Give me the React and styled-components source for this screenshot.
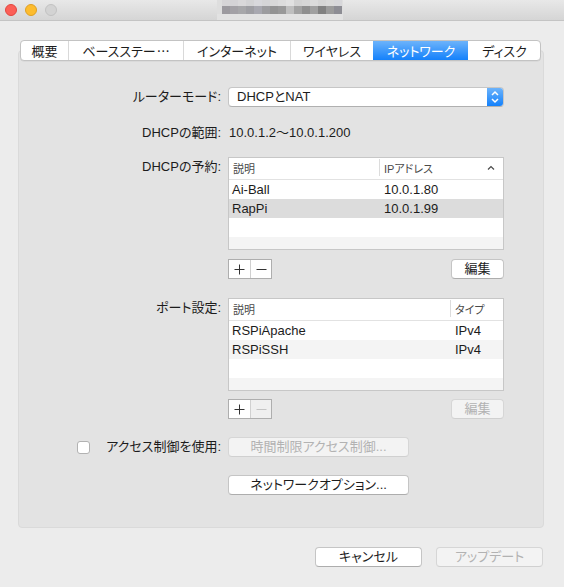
import React from 'react';
import styled, { createGlobalStyle } from 'styled-components';

const Global = createGlobalStyle`
  html, body { margin: 0; padding: 0; background: #ececec; }
  body {
    font-family: "Liberation Sans", "Noto Sans CJK JP", sans-serif;
    font-size: 13px;
    color: #1c1c1c;
    font-feature-settings: "palt";
  }
  * { box-sizing: border-box; }
`;

const Window = styled.div`
  width: 564px;
  height: 587px;
  background: #ececec;
  display: flex;
  flex-direction: column;
  overflow: hidden;
`;

const TitleBar = styled.div`
  height: 21px;
  flex: none;
  display: flex;
  align-items: flex-start;
  padding-left: 5px;
  background: linear-gradient(#e8e8e8, #d5d5d5);
  border-bottom: 1px solid #c4c4c4;
`;

const Lights = styled.div`
  display: flex;
  gap: 8px;
  margin-top: 4px;
`;

const Light = styled.span`
  width: 12px;
  height: 12px;
  border-radius: 50%;
  background: ${p => p.$c};
  border: 1px solid ${p => p.$b};
`;

const TitleMosaic = styled.svg`
  margin-left: 160px;
  display: block;
`;

const Body = styled.div`
  flex: 1;
  display: flex;
  flex-direction: column;
  padding: 19px 20px 0 18px;
`;

const TabBar = styled.div`
  position: relative;
  z-index: 1;
  display: flex;
  height: 21px;
  margin: 0 3px -11px 2px;
  background: #fff;
  border: 1px solid #c3c3c3;
  border-radius: 4px;
  overflow: hidden;
  box-shadow: 0 0.5px 0 rgba(0,0,0,0.08);
`;

const Tab = styled.div`
  flex: ${p => (p.$w ? `0 0 ${p.$w}px` : '1')};
  display: flex;
  align-items: center;
  justify-content: center;
  white-space: nowrap;
  color: ${p => (p.$active ? '#fff' : '#1c1c1c')};
  background: ${p => (p.$active ? 'linear-gradient(#6cb3fb, #1481fb)' : 'transparent')};
  border-left: 1px solid ${p => (p.$first ? 'transparent' : p.$active || p.$afterActive ? 'transparent' : '#d9d9d9')};
  ${p => p.$first && 'border-left: none;'}
`;

const Ellipsis = styled.span`
  font-family: "Noto Sans CJK JP", sans-serif;
  margin-left: 1px;
`;

const Panel = styled.div`
  background: #e3e3e3;
  border: 1px solid #dadada;
  border-radius: 4px;
  padding: 36px 0 32px 0;
  display: flex;
  flex-direction: column;
`;

const FormRow = styled.div`
  display: grid;
  grid-template-columns: 202px 276px;
  column-gap: 7px;
  margin-top: ${p => p.$mt || 0}px;
`;

const Label = styled.div`
  display: flex;
  justify-content: flex-end;
  align-items: ${p => (p.$top ? 'flex-start' : 'center')};
  gap: 17px;
  line-height: 20px;
  height: 20px;
  white-space: nowrap;
`;

const Value = styled.div`
  line-height: 20px;
  padding-left: 1px;
`;

const Select = styled.div`
  height: 20px;
  display: flex;
  background: #fff;
  border: 1px solid #c6c6c6;
  border-bottom-color: #b0b0b0;
  border-radius: 4px;
  overflow: hidden;
`;

const SelectText = styled.div`
  flex: 1;
  padding-left: 8px;
  line-height: 18px;
`;

const Stepper = styled.div`
  width: 16px;
  display: flex;
  align-items: center;
  justify-content: center;
  background: linear-gradient(#6cb3fb, #1481fb);
`;

const Table = styled.div`
  height: 93px;
  background: #fff;
  border: 1px solid #c7c7c7;
  display: flex;
  flex-direction: column;
  overflow: hidden;
`;

const HeaderRow = styled.div`
  flex: none;
  display: grid;
  grid-template-columns: ${p => p.$cols};
  height: 22px;
  border-bottom: 1px solid #e2e2e2;
  font-size: 11px;
  color: #4a4a4a;
`;

const HeaderCell = styled.div`
  display: flex;
  align-items: center;
  justify-content: space-between;
  padding: 0 ${p => (p.$sep ? 8 : 3)}px 0 ${p => (p.$sep ? 4 : 3)}px;
  margin: 1px 0 3px;
  border-left: 1px solid ${p => (p.$sep ? '#dcdcdc' : 'transparent')};
`;

const Row = styled.div`
  flex: none;
  display: grid;
  grid-template-columns: ${p => p.$cols};
  height: 19px;
  line-height: 19px;
  background: ${p => (p.$sel ? '#dcdcdc' : p.$odd ? '#f4f4f4' : '#fff')};
`;

const Cell = styled.div`
  padding-left: ${p => (p.$second ? 5 : 3)}px;
  white-space: nowrap;
`;

const ButtonRow = styled.div`
  display: flex;
  justify-content: space-between;
  align-items: center;
`;

const Segmented = styled.div`
  display: flex;
  height: 20px;
  border: 1px solid #aeaeae;
  background: #fff;
`;

const SegButton = styled.div`
  width: 21px;
  display: flex;
  align-items: center;
  justify-content: center;
  background: ${p => (p.$disabled ? '#efefef' : '#fff')};
  & + & { border-left: 1px solid ${p => (p.$disabled ? '#d0d0d0' : '#aeaeae')}; }
`;

const PushButton = styled.button`
  width: ${p => p.$w}px;
  height: 20px;
  padding: 0;
  font: inherit;
  font-size: 13px;
  line-height: 18px;
  border-radius: 4px;
  border: 1px solid ${p => (p.$disabled ? '#d6d6d6' : '#c5c5c5')};
  border-bottom-color: ${p => (p.$disabled ? '#d0d0d0' : '#adadad')};
  background: ${p => (p.$disabled ? '#f3f3f3' : '#fff')};
  color: ${p => (p.$disabled ? '#b2b2b2' : '#1c1c1c')};
  text-align: center;
  white-space: nowrap;
`;

const Checkbox = styled.span`
  width: 13px;
  height: 13px;
  background: #fff;
  border: 1px solid #b2b2b2;
  border-radius: 3px;
`;

const CheckLabel = styled(Label)`
  gap: 16px;
`;

const Footer = styled.div`
  display: flex;
  justify-content: flex-end;
  gap: 14px;
  padding: 19px 1px 0 0;
`;

const mosaicTop = ['#d6d5d7', '#d4d3d6', '#d9d8da', '#d3d3d5', '#d8d8dc', '#d5d5d7', '#d8d8d8', '#dcdcdc', '#e1e1e1', '#d3d3d3', '#d6d6d6', '#dbdbdb', '#d5d5d5', '#d9d9d9', '#d7d7da'];
const mosaicMid = ['#9c9a9f', '#a3a1a6', '#a7a7aa', '#9e9ea3', '#a8a8b0', '#9c9c9f', '#939393', '#999999', '#bfbfbf', '#a2a2a2', '#8f8f8f', '#a0a0a0', '#818181', '#9b9b9b', '#8d8d94'];

const Title = () => (
  <TitleMosaic width="126" height="20" viewBox="0 0 126 20">
    <rect x="0" y="0" width="126" height="20" fill="#dedede" />
    {mosaicTop.map((c, i) => (
      <rect key={'t' + i} x={5 + i * 8} y="0" width="8" height="6" fill={c} />
    ))}
    {mosaicMid.map((c, i) => (
      <rect key={'m' + i} x={5 + i * 8} y="6" width="8" height="8" fill={c} />
    ))}
    <rect x="0" y="14" width="126" height="6" fill="#e2e2e2" />
  </TitleMosaic>
);

const Plus = ({ c }) => (
  <svg width="11" height="11" viewBox="0 0 11 11">
    <path d="M5.5 0.5V10.5M0.5 5.5H10.5" stroke={c} strokeWidth="1" fill="none" />
  </svg>
);
const Minus = ({ c }) => (
  <svg width="11" height="11" viewBox="0 0 11 11">
    <path d="M0.5 5.5H10.5" stroke={c} strokeWidth="1" fill="none" />
  </svg>
);

const tabs = [
  { t: '概要', w: 47 },
  { t: 'ベースステー', w: 115, ellipsis: true },
  { t: 'インターネット', w: 107 },
  { t: 'ワイヤレス', w: 83 },
  { t: 'ネットワーク', w: 95, active: true },
  { t: 'ディスク' },
];

const DataTable = ({ cols, head, rows, sort }) => (
  <Table>
    <HeaderRow $cols={cols}>
      <HeaderCell>{head[0]}</HeaderCell>
      <HeaderCell $sep>
        <span>{head[1]}</span>
        {sort && (
          <svg width="8" height="5" viewBox="0 0 8 5">
            <path d="M1 4.5L4 1.5L7 4.5" stroke="#4a4a4a" strokeWidth="1.2" fill="none" />
          </svg>
        )}
      </HeaderCell>
    </HeaderRow>
    {[0, 1, 2, 3].map(i => {
      const r = rows[i];
      return (
        <Row key={i} $cols={cols} $odd={i % 2 === 1} $sel={r && r.sel}>
          <Cell>{r ? r.a : ''}</Cell>
          <Cell $second>{r ? r.b : ''}</Cell>
        </Row>
      );
    })}
  </Table>
);

export default function App() {
  return (
    <>
      <Global />
      <Window lang="ja">
        <TitleBar>
          <Lights>
            <Light $c="#fc5f57" $b="#e2463f" />
            <Light $c="#fdbc2e" $b="#dfa023" />
            <Light $c="#d3d3d3" $b="#c2c2c2" />
          </Lights>
          <Title />
        </TitleBar>
        <Body>
          <TabBar>
            {tabs.map((tb, i) => (
              <Tab
                key={tb.t}
                $w={tb.w}
                $first={i === 0}
                $active={tb.active}
                $afterActive={i > 0 && tabs[i - 1].active}
              >
                {tb.t}
                {tb.ellipsis && <Ellipsis>⋯</Ellipsis>}
              </Tab>
            ))}
          </TabBar>
          <Panel>
            <FormRow>
              <Label>ルーターモード:</Label>
              <Select>
                <SelectText>DHCPとNAT</SelectText>
                <Stepper>
                  <svg width="10" height="14" viewBox="0 0 10 14">
                    <path d="M2 5L5 2L8 5M2 9L5 12L8 9" stroke="#fff" strokeWidth="1.5" fill="none" />
                  </svg>
                </Stepper>
              </Select>
            </FormRow>
            <FormRow $mt={16}>
              <Label>DHCPの範囲:</Label>
              <Value>10.0.1.2〜10.0.1.200</Value>
            </FormRow>
            <FormRow $mt={14}>
              <Label $top>DHCPの予約:</Label>
              <DataTable
                cols="150px 1fr"
                head={['説明', 'IPアドレス']}
                sort
                rows={[
                  { a: 'Ai-Ball', b: '10.0.1.80' },
                  { a: 'RapPi', b: '10.0.1.99', sel: true },
                ]}
              />
            </FormRow>
            <FormRow $mt={9}>
              <div />
              <ButtonRow>
                <Segmented>
                  <SegButton><Plus c="#333" /></SegButton>
                  <SegButton><Minus c="#333" /></SegButton>
                </Segmented>
                <PushButton $w={53}>編集</PushButton>
              </ButtonRow>
            </FormRow>
            <FormRow $mt={19}>
              <Label $top>ポート設定:</Label>
              <DataTable
                cols="221px 1fr"
                head={['説明', 'タイプ']}
                rows={[
                  { a: 'RSPiApache', b: 'IPv4' },
                  { a: 'RSPiSSH', b: 'IPv4' },
                ]}
              />
            </FormRow>
            <FormRow $mt={8}>
              <div />
              <ButtonRow>
                <Segmented>
                  <SegButton><Plus c="#333" /></SegButton>
                  <SegButton $disabled><Minus c="#c4c4c4" /></SegButton>
                </Segmented>
                <PushButton $w={53} $disabled>編集</PushButton>
              </ButtonRow>
            </FormRow>
            <FormRow $mt={18}>
              <CheckLabel>
                <Checkbox />
                <span>アクセス制御を使用:</span>
              </CheckLabel>
              <div>
                <PushButton $w={181} $disabled>時間制限アクセス制御...</PushButton>
              </div>
            </FormRow>
            <FormRow $mt={18}>
              <div />
              <div>
                <PushButton $w={181}>ネットワークオプション...</PushButton>
              </div>
            </FormRow>
          </Panel>
          <Footer>
            <PushButton $w={107}>キャンセル</PushButton>
            <PushButton $w={107} $disabled>アップデート</PushButton>
          </Footer>
        </Body>
      </Window>
    </>
  );
}
